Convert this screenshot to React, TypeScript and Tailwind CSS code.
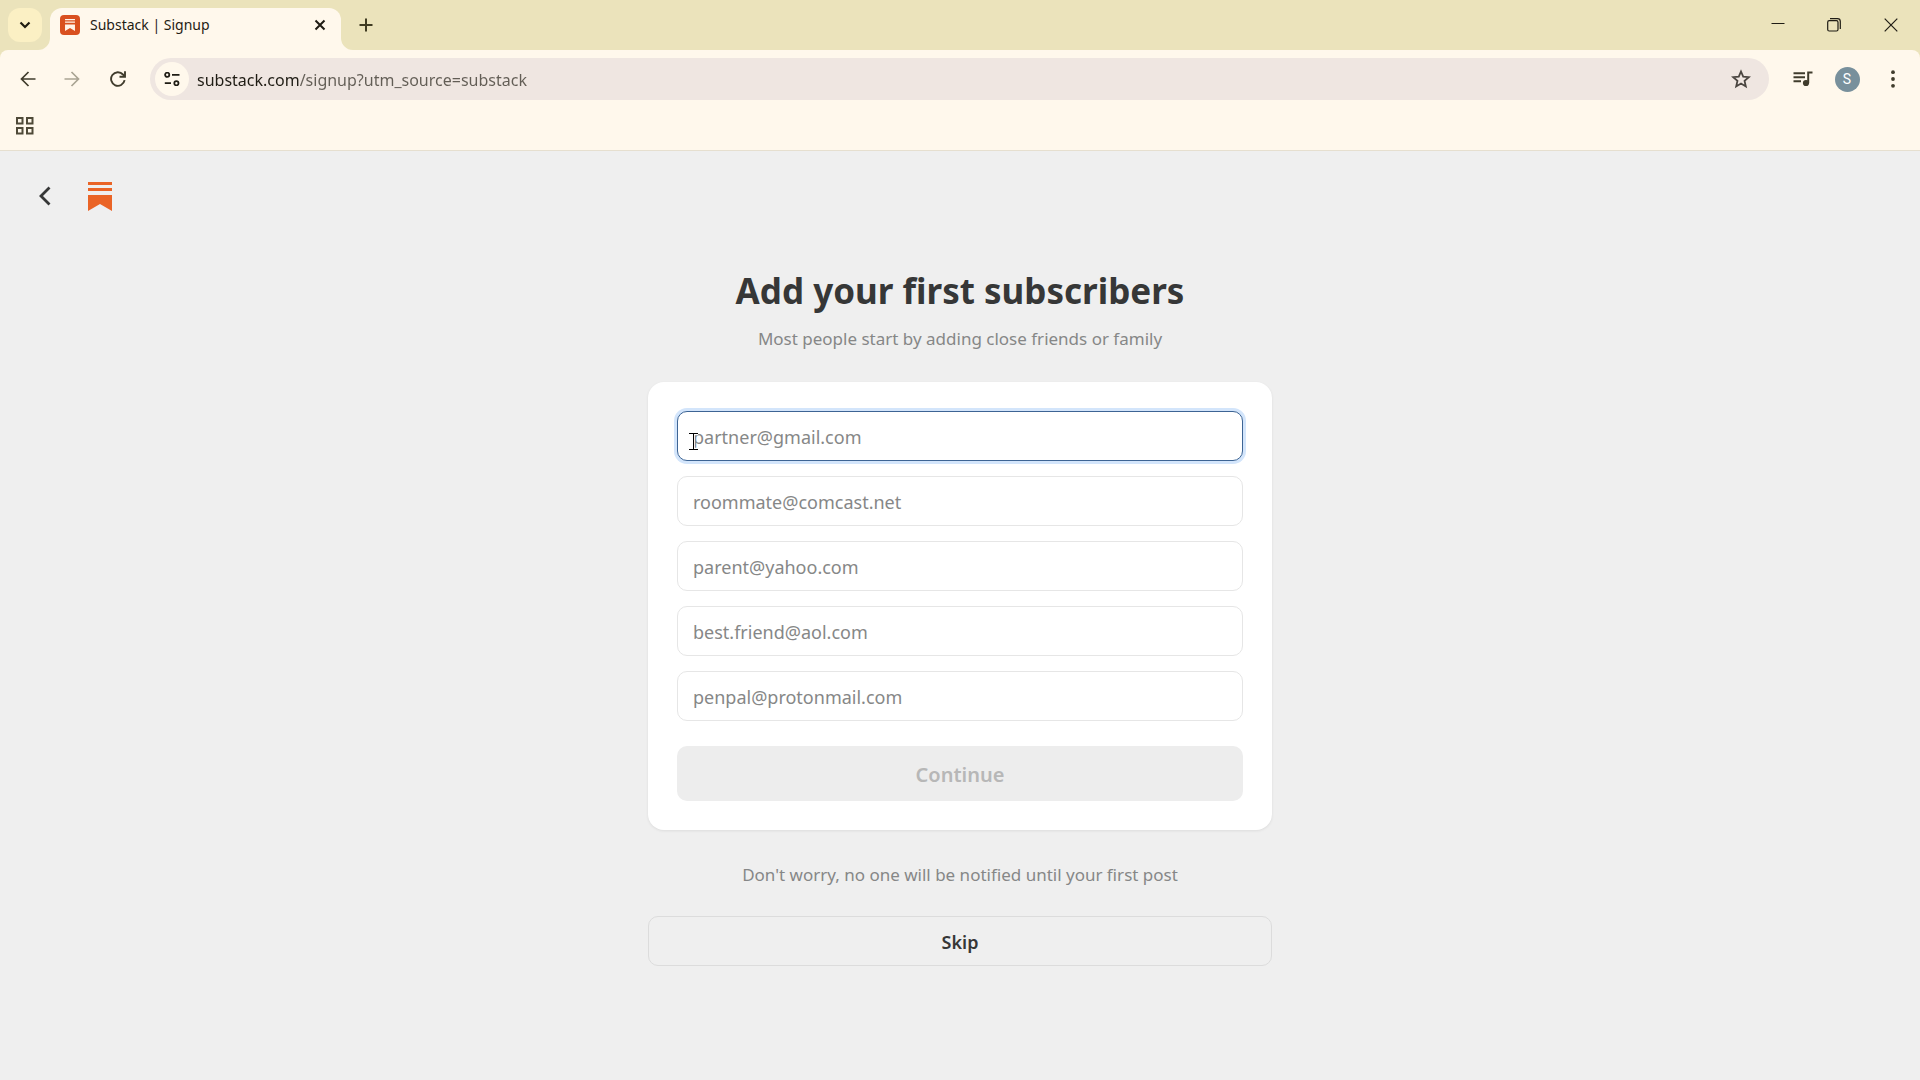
import type React from "react"
import { useState } from "react"

const emailFields = [
  { id: "email-1", placeholder: "partner@gmail.com" },
  { id: "email-2", placeholder: "roommate@comcast.net" },
  { id: "email-3", placeholder: "parent@yahoo.com" },
  { id: "email-4", placeholder: "best.friend@aol.com" },
  { id: "email-5", placeholder: "penpal@protonmail.com" },
]

function SubstackMark({ className }: { className?: string }) {
  return (
    <svg viewBox="0 0 24 29" className={className} aria-hidden="true">
      <path d="M0 0h24v3H0zM0 6h24v3H0zM0 13h24v16L12 22 0 29z" fill="currentColor" />
    </svg>
  )
}

function IconButton({ label, className = "", children }: { label: string; className?: string; children: React.ReactNode }) {
  return (
    <button type="button" aria-label={label} className={`flex shrink-0 items-center justify-center ${className}`}>
      {children}
    </button>
  )
}

function TabStrip() {
  return (
    <div className="flex h-[50px] items-end bg-[#ebe3bb] text-[#403c22]">
      <IconButton label="Search tabs" className="mb-2 ml-2 size-[34px] rounded-xl bg-[#fbf0c4] text-[#1f1c10]">
        <svg viewBox="0 0 16 16" className="size-4" fill="none" stroke="currentColor" strokeWidth="2.2">
          <path d="m3.500 5.500 4.500 4.500 4.500-4.500" />
        </svg>
      </IconButton>
      {/* flared feet on both sides of the active tab */}
      <svg viewBox="0 0 12 12" className="-ml-1 size-3 text-[#fff8ec]" aria-hidden="true">
        <path d="M12 0v12H0A12 12 0 0 0 12 0z" fill="currentColor" />
      </svg>
      <div className="flex h-[42px] w-[291px] items-center rounded-t-xl bg-[#fff8ec] pr-[11px] pb-2 pl-[10px]">
        <span className="flex size-5 items-center justify-center rounded-[4px] bg-[#d9501f] text-[#fff3ea]">
          <SubstackMark className="h-3 w-[10px]" />
        </span>
        <span className="ml-[10px] flex-1 text-[14px] leading-5 text-[#1f1c14]">Substack | Signup</span>
        <IconButton label="Close tab" className="size-5 text-[#1f1c14]">
          <svg viewBox="0 0 12 12" className="size-3" fill="none" stroke="currentColor" strokeWidth="2">
            <path d="m1.500 1.500 9 9m0-9-9 9" />
          </svg>
        </IconButton>
      </div>
      <svg viewBox="0 0 12 12" className="size-3 text-[#fff8ec]" aria-hidden="true">
        <path d="M0 0v12h12A12 12 0 0 1 0 0z" fill="currentColor" />
      </svg>
      <IconButton label="New tab" className="mb-2 ml-[-4px] size-[34px]">
        <svg viewBox="0 0 14 14" className="size-[14px]" fill="none" stroke="currentColor" strokeWidth="2">
          <path d="M7 .5v13M.5 7h13" />
        </svg>
      </IconButton>
      <div className="ml-auto flex h-full items-center text-[#1f1c14]">
        <IconButton label="Minimize" className="h-full w-14">
          <svg viewBox="0 0 14 14" className="size-[14px]" stroke="currentColor">
            <path d="M.5 5.500h13" />
          </svg>
        </IconButton>
        <IconButton label="Restore" className="h-full w-14">
          <svg viewBox="0 0 14 14" className="size-[14px]" fill="none" stroke="currentColor" strokeWidth="1.200">
            <rect x=".7" y="2.700" width="10.300" height="10.300" rx="1.500" />
            <path d="M3 .7h7.500a2.800 2.800 0 0 1 2.800 2.800V11" />
          </svg>
        </IconButton>
        <IconButton label="Close" className="h-full w-[58px]">
          <svg viewBox="0 0 14 14" className="size-[14px]" fill="none" stroke="currentColor" strokeWidth="1.200">
            <path d="m.7.7 12.600 12.600m0-12.600L.7 13.300" />
          </svg>
        </IconButton>
      </div>
    </div>
  )
}

function Toolbar() {
  const [url, setUrl] = useState("substack.com/signup?utm_source=substack")

  return (
    <div className="bg-[#ebe3bb]">
      <div className="flex h-[58px] items-center rounded-t-lg bg-[#fff8ec] pr-[7px] pl-2 text-[#403c2c]">
        <IconButton label="Back" className="size-10">
          <svg viewBox="0 0 16 16" className="size-4" fill="none" stroke="currentColor" strokeWidth="1.700">
            <path d="M15.500 8H2M8.500 1 1.500 8l7 7" />
          </svg>
        </IconButton>
        <IconButton label="Forward" className="ml-1 size-10 text-[#aaa493]">
          <svg viewBox="0 0 16 16" className="size-4" fill="none" stroke="currentColor" strokeWidth="1.700">
            <path d="M.5 8H14M7.500 1l7 7-7 7" />
          </svg>
        </IconButton>
        <IconButton label="Reload" className="ml-[6px] size-10">
          <svg viewBox="0 0 16 16" className="size-4" fill="none" stroke="currentColor" strokeWidth="1.900">
            <path d="M14.600 9.200A6.800 6.800 0 1 1 13 3.500L14.500 5" />
            <path d="M15 .3v5.500H9.500" />
          </svg>
        </IconButton>
        <div className="ml-3 flex h-[42px] flex-1 items-center rounded-full bg-[#efe6e1] pr-2 pl-[5px]">
          <IconButton label="View site information" className="size-[34px] rounded-full bg-[#fff8ec] text-[#1f1c14]">
            <svg viewBox="0 0 16 14" className="h-[14px] w-4" fill="none" stroke="currentColor" strokeWidth="1.800">
              <circle cx="3.200" cy="2.800" r="2.100" />
              <path d="M8 2.800h7.500M.8 11.200H7" />
              <circle cx="12.400" cy="11.200" r="2.100" />
            </svg>
          </IconButton>
          {/* the host is darker than the path that follows it */}
          <input
            type="text"
            aria-label="Address and search bar"
            value={url}
            onChange={(e) => setUrl(e.target.value)}
            className="ml-2 h-8 flex-1 bg-[linear-gradient(to_right,#1f1c14_102px,#625d55_102px)] bg-clip-text pt-[2px] text-[16px] text-transparent outline-none"
          />
          <IconButton label="Bookmark this tab" className="size-10 text-[#4a4540]">
            <svg viewBox="0 0 20 20" className="size-5" fill="none" stroke="currentColor" strokeWidth="1.800">
              <path d="m10 2.500 2.200 5.200 5.600.5-4.250 3.700 1.250 5.500L10 14.500l-4.800 2.900 1.250-5.500L2.200 8.200l5.600-.5z" />
            </svg>
          </IconButton>
        </div>
        <IconButton label="Media controls" className="ml-[14px] size-10">
          <svg viewBox="0 0 20 16" className="h-4 w-5" fill="none" stroke="currentColor" strokeWidth="2">
            <path d="M.5 2.200H12M.5 6.200H12M.5 10.200H8M15.200 12V1.500H19.500" />
            <circle cx="13" cy="12" r="3.100" fill="currentColor" stroke="none" />
          </svg>
        </IconButton>
        <IconButton label="Profile" className="ml-1 size-10">
          <span className="flex size-[25px] items-center justify-center rounded-full bg-[#78909c] font-[Roboto,sans-serif] text-[14px] text-white">
            S
          </span>
        </IconButton>
        <IconButton label="Customize and control" className="ml-[6px] size-10">
          <svg viewBox="0 0 4 18" className="h-[18px] w-1" fill="currentColor">
            <circle cx="2" cy="2.200" r="1.900" />
            <circle cx="2" cy="9" r="1.900" />
            <circle cx="2" cy="15.800" r="1.900" />
          </svg>
        </IconButton>
      </div>
      <div className="flex h-[43px] items-center border-b border-[#e6dfcf] bg-[#fff8ec] pb-[6px] pl-4 text-[#4f4a38]">
        <IconButton label="All apps" className="size-[18px]">
          <svg viewBox="0 0 18 18" className="size-[18px]" fill="none" stroke="currentColor" strokeWidth="2">
            <rect x="1" y="1" width="5.500" height="5.500" />
            <rect x="11" y="1" width="5.500" height="5.500" />
            <rect x="1" y="11" width="5.500" height="5.500" />
            <rect x="11" y="11" width="5.500" height="5.500" />
          </svg>
        </IconButton>
      </div>
    </div>
  )
}

function TextCursor() {
  return (
    <svg viewBox="0 0 9 17" className="absolute top-[22px] left-3 h-[17px] w-[9px]" fill="none" aria-hidden="true">
      <path d="M0 1h3.500L4.500 2l1-1H9M0 16h3.500l1-1 1 1H9M4.500 2v13" stroke="#fff" strokeWidth="2.500" />
      <path d="M0 .5h9M0 16.500h9M4.500 1v15" stroke="#000" />
    </svg>
  )
}

function SubscriberForm() {
  return (
    <form
      onSubmit={(e) => e.preventDefault()}
      className="mt-7 rounded-2xl bg-white p-[29px] shadow-[0_1px_3px_rgba(0,0,0,0.08)]"
    >
      <div className="flex flex-col gap-[15px]">
        {emailFields.map((field, i) => (
          <div key={field.id} className="relative">
            <input
              id={field.id}
              type="email"
              aria-label={`Subscriber email ${i + 1}`}
              placeholder={field.placeholder}
              className={`block h-[50px] w-full rounded-[10px] border bg-white px-[15px] pt-[2px] text-[18px] text-[#363737] outline-none placeholder:text-[#868787] ${
                i === 0 ? "border-[#3d6494] shadow-[0_0_0_3px_#d3e5fb]" : "border-[#e6e6e6]"
              }`}
            />
            {i === 0 && <TextCursor />}
          </div>
        ))}
      </div>
      <button
        type="submit"
        disabled
        className="mt-[25px] h-[55px] w-full rounded-[10px] bg-[#ededed] pt-[2px] text-[20px] font-semibold text-[#b7b7b7]"
      >
        Continue
      </button>
    </form>
  )
}

export default function App() {
  return (
    <div className="flex min-h-screen flex-col bg-[#efefef] font-['Noto_Sans','Open_Sans',sans-serif]">
      <header>
        <TabStrip />
        <Toolbar />
      </header>
      <nav className="flex h-[90px] items-center pl-[30px]">
        <IconButton label="Go back" className="size-[30px] text-[#363737]">
          <svg viewBox="0 0 12 20" className="h-5 w-3" fill="none" stroke="currentColor" strokeWidth="2.800">
            <path d="m10.500 1.500-8.500 8.500 8.500 8.500" />
          </svg>
        </IconButton>
        <a href="#" aria-label="Substack" className="ml-7 text-[#ea6426]">
          <SubstackMark className="h-[29px] w-6" />
        </a>
      </nav>
      <main className="mx-auto w-full max-w-[624px] pt-6">
        <h1 className="text-center text-[35px] leading-[52px] font-bold text-[#363737]">Add your first subscribers</h1>
        <p className="mt-[7px] text-center text-[17px] leading-[30px] text-[#868787]">
          Most people start by adding close friends or family
        </p>
        <SubscriberForm />
        <p className="mt-[30px] text-center text-[17px] leading-[30px] text-[#868787]">
          Don't worry, no one will be notified until your first post
        </p>
        <button
          type="button"
          className="mt-[26px] h-[50px] w-full rounded-[10px] border border-[#dcdcdc] pt-[2px] text-[18px] font-semibold text-[#363737]"
        >
          Skip
        </button>
      </main>
    </div>
  )
}
